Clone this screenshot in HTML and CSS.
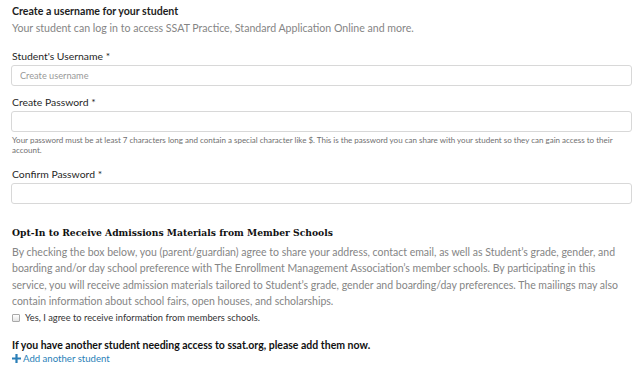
FILE: index.html
```html
<!DOCTYPE html>
<html lang="en">
<head>
  <meta charset="utf-8">
  <title>Add student</title>
  <link rel="stylesheet" href="styles.css">
</head>
<body>
  <form class="form">
    <section class="form-section">
      <h2 class="section-title">Create a username for your student</h2>
      <p class="section-lead">Your student can log in to access SSAT Practice, Standard Application Online and more.</p>

      <div class="field">
        <label class="field-label" for="username">Student's Username *</label>
        <input class="field-input" id="username" type="text" placeholder="Create username">
      </div>

      <div class="field">
        <label class="field-label" for="password">Create Password *</label>
        <input class="field-input" id="password" type="password">
        <p class="field-help">Your password must be at least 7 characters long and contain a special character like $. This is the password you can share with your student so they can gain access to their account.</p>
      </div>

      <div class="field field-last">
        <label class="field-label" for="confirm">Confirm Password *</label>
        <input class="field-input" id="confirm" type="password">
      </div>
    </section>

    <section class="form-section optin">
      <h2 class="optin-title">Opt-In to Receive Admissions Materials from Member Schools</h2>
      <p class="optin-text">By checking the box below, you (parent/guardian) agree to share your address, contact email, as well as Student’s grade, gender, and boarding and/or day school preference with The Enrollment Management Association’s member schools. By participating in this service, you will receive admission materials tailored to Student’s grade, gender and boarding/day preferences. The mailings may also contain information about school fairs, open houses, and scholarships.</p>
      <label class="check">
        <input class="check-box" type="checkbox">
        <span class="check-text">Yes, I agree to receive information from members schools.</span>
      </label>
    </section>

    <section class="form-section another">
      <p class="another-title">If you have another student needing access to ssat.org, please add them now.</p>
      <a class="add-link" href="#">
        <svg class="add-icon" width="9" height="9" viewBox="0 0 9 9"><path d="M4.5 0v9M0 4.5h9" stroke="#2a7fb8" stroke-width="2.2"/></svg>
        Add another student
      </a>
    </section>
  </form>
</body>
</html>
```

FILE: styles.css
```css
*, *::before, *::after {
  margin: 0;
  padding: 0;
  box-sizing: border-box;
}

body {
  padding: 4px 8px 0 11px;
  background-color: #FFFFFF;
  color: #1d1d1d;
  font-family: "Lato", sans-serif;
}

.section-title {
  padding-left: 1px;
  font-size: 10.6px;
  font-weight: 700;
  line-height: 14px;
}

.section-lead {
  margin-top: 2.5px;
  padding-left: 1px;
  color: #858585;
  font-size: 10.6px;
  line-height: 15px;
}

.field {
  margin-top: 8.5px;
}

.section-lead + .field {
  margin-top: 13px;
}

.field-last {
  margin-top: 11.5px;
}

.field-label {
  display: block;
  padding-left: 1px;
  font-size: 10.4px;
  line-height: 15px;
  color: #1f1f1f;
}

.field-input {
  display: block;
  width: 621px;
  height: 21px;
  margin-top: 1.5px;
  padding: 0 8px;
  border: 1px solid #d8d8d8;
  border-radius: 3px;
  font-family: inherit;
  font-size: 9.2px;
  color: #333;
}

.field-input::placeholder {
  color: #999;
}

.field-help {
  margin-top: 3px;
  padding-left: 1px;
  font-size: 8px;
  line-height: 10px;
  color: #6f6f6f;
}

.optin {
  margin-top: 21.5px;
}

.optin-title {
  padding-left: 1px;
  font-family: "DejaVu Serif", serif;
  font-size: 9.2px;
  font-weight: 700;
  line-height: 14px;
  color: #111;
}

.optin-text {
  margin-top: 4px;
  padding-left: 1px;
  font-size: 10.5px;
  line-height: 16.5px;
  color: #858585;
}

.check {
  display: flex;
  align-items: center;
  gap: 5px;
  margin-top: 1px;
  padding-left: 1px;
}

.check-box {
  appearance: none;
  width: 8px;
  height: 8px;
  border: 1px solid #a9a9a9;
  border-radius: 1px;
  background: linear-gradient(#ffffff, #e4e4e4);
}

.check-box:checked {
  background: #2a7fb8;
}

.check-text {
  font-size: 9.3px;
  line-height: 14px;
  color: #333;
}

.another {
  margin-top: 13px;
}

.another-title {
  padding-left: 1px;
  font-size: 10.5px;
  font-weight: 700;
  line-height: 14px;
  color: #111;
}

.add-link {
  display: flex;
  align-items: center;
  gap: 2px;
  padding-left: 1px;
  font-size: 9.6px;
  line-height: 14px;
  color: #2a7fb8;
  text-decoration: none;
}
```
